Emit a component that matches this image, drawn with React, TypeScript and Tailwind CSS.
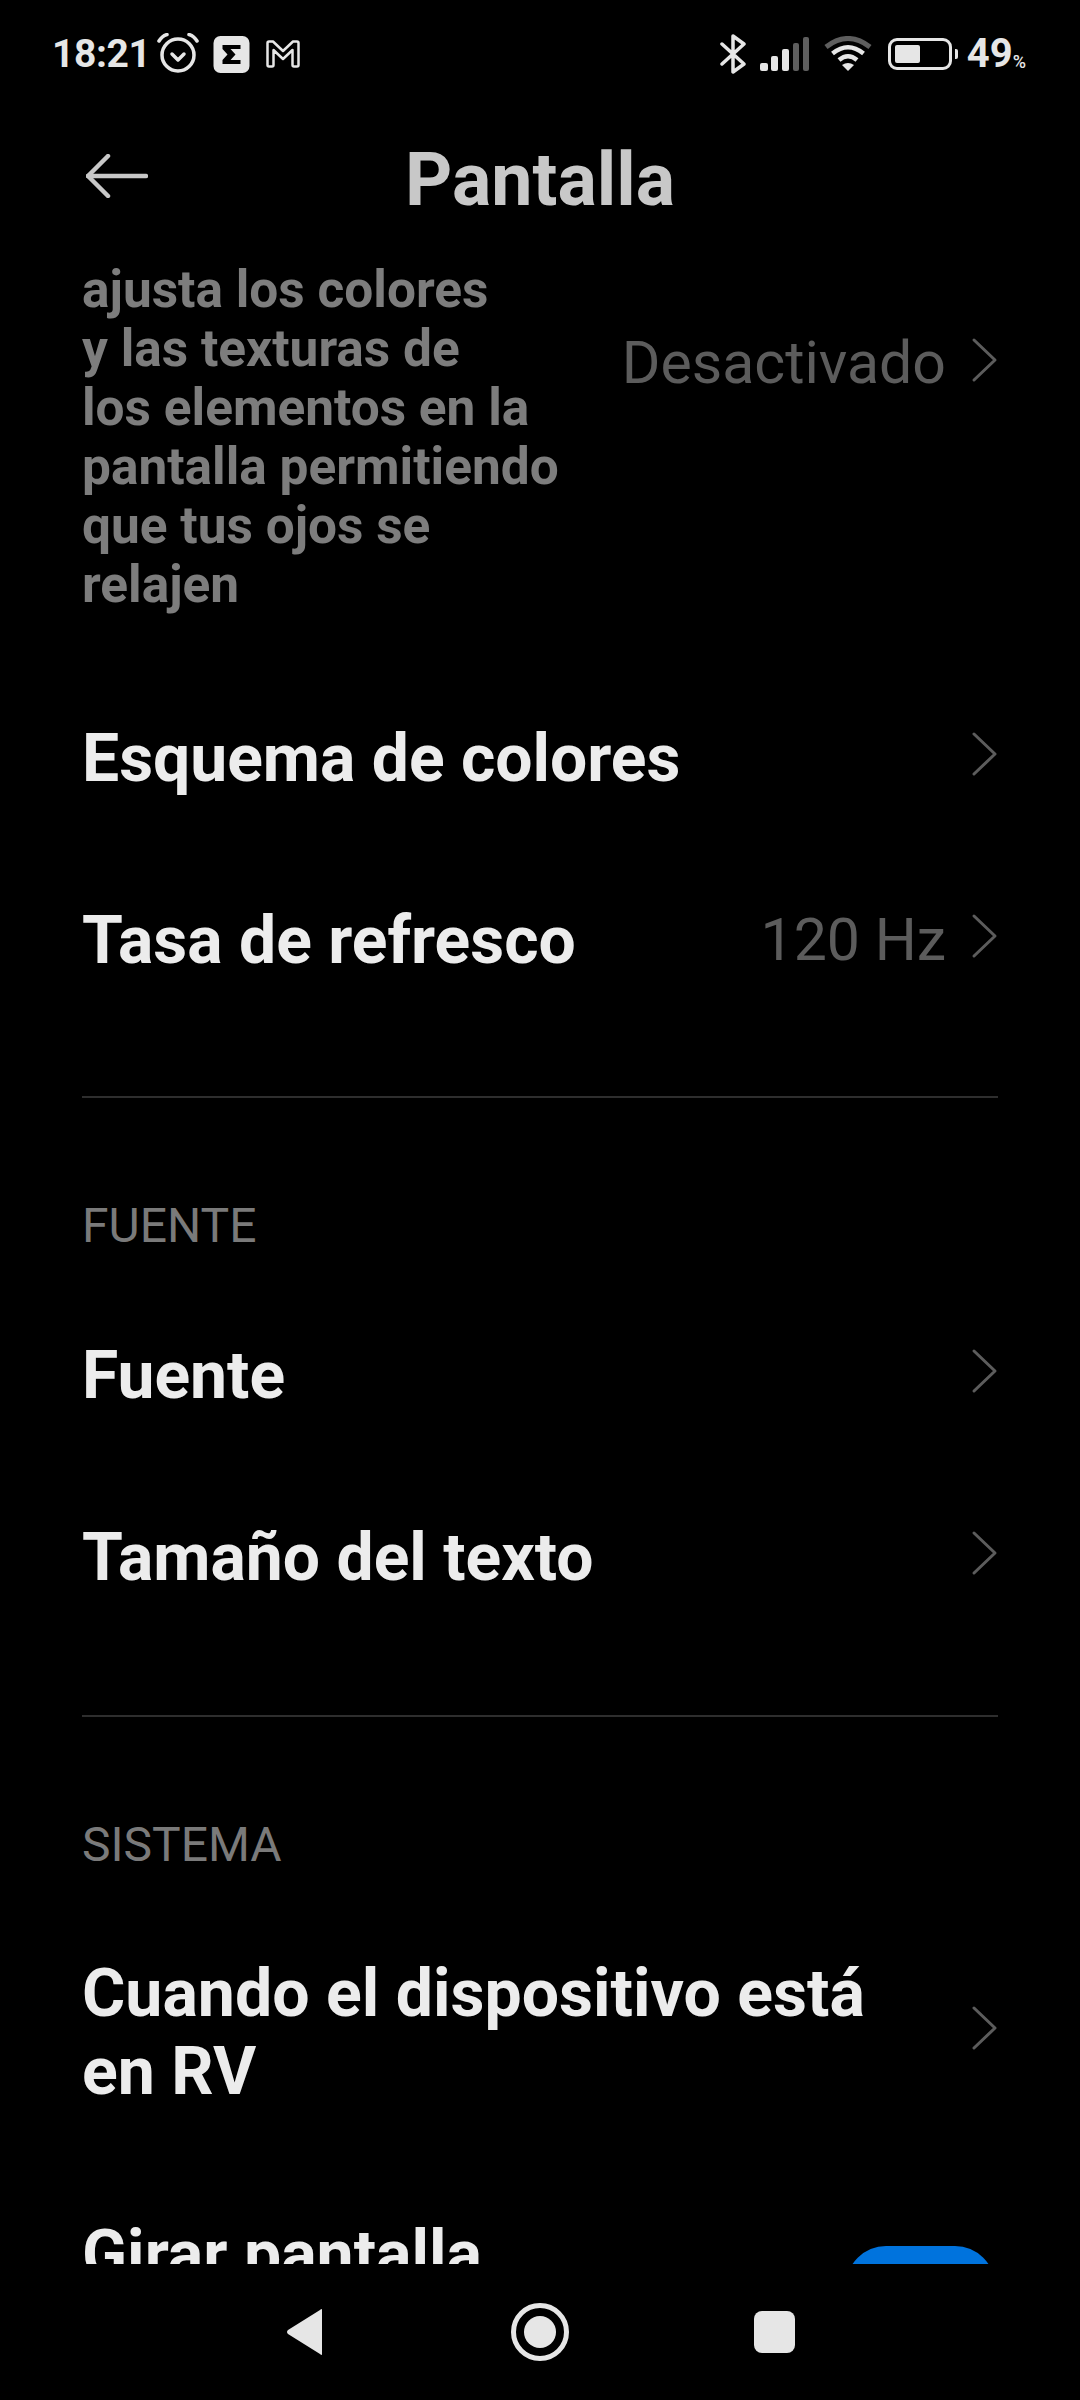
const font = { fontFamily: 'Roboto, sans-serif' }

function Chevron() {
  return (
    <svg width="28" height="48" viewBox="0 0 28 48" className="mb-[6px] shrink-0 text-[#5c5c5c]" fill="none">
      <path d="M4 4 L25 24 L4 44" stroke="currentColor" strokeWidth="3" strokeLinecap="round" strokeLinejoin="round" />
    </svg>
  )
}

function StatusBar() {
  return (
    <div className="flex h-[108px] items-center justify-between pl-[52px] pr-[54px] text-[#e6e6e6]">
      <div className="flex items-center">
        <span className="text-[39px] font-bold leading-none tracking-[-0.4px]">18:21</span>
        <svg width="42" height="40" viewBox="0 0 42 40" className="mb-[2px] ml-[6px]" fill="none" stroke="#e6e6e6" strokeWidth="3.5" strokeLinecap="round" strokeLinejoin="round">
          <circle cx="21" cy="22" r="16" />
          <path d="M15 21 L21 27 L27 21" />
          <path d="M2 8 Q5 3 10 1.5" />
          <path d="M40 8 Q37 3 32 1.5" />
        </svg>
        <svg width="37" height="37" viewBox="0 0 36 37" className="ml-[14px]">
          <rect width="36" height="37" rx="7" fill="#e6e6e6" />
          <path d="M9 9 H27 V13 H17 L22 18.5 L17 24 H27 V28 H9 V24 L14 18.5 L9 13 Z" fill="#000" />
        </svg>
        <svg width="34" height="28" viewBox="0 0 34 28" className="ml-[16px]" fill="none" stroke="#e6e6e6" strokeWidth="2.5" strokeLinejoin="round">
          <path d="M1.5 3 Q1.5 1.5 3 1.5 H7 L17 11 L27 1.5 H31 Q32.5 1.5 32.5 3 V25 Q32.5 26.5 31 26.5 H28 Q26.5 26.5 26.5 25 V10 L17 19 L7.5 10 V25 Q7.5 26.5 6 26.5 H3 Q1.5 26.5 1.5 25 Z" />
        </svg>
      </div>
      <div className="flex items-center">
        <svg width="26" height="40" viewBox="0 0 26 40" fill="none" stroke="#e6e6e6" strokeWidth="3.5" strokeLinecap="round" strokeLinejoin="round">
          <path d="M2 10 L24 30 L13 38 V2 L24 10 L2 30" />
        </svg>
        <svg width="50" height="34" viewBox="0 0 50 34" className="ml-[14px]">
          <rect x="0" y="26" width="8" height="8" rx="2" fill="#e6e6e6" />
          <rect x="11" y="19" width="7" height="15" rx="2" fill="#e6e6e6" />
          <rect x="22" y="12" width="7" height="22" rx="2" fill="#e6e6e6" />
          <rect x="33" y="6" width="6" height="28" rx="2" fill="#5e5e5e" />
          <rect x="43" y="0" width="6" height="34" rx="2" fill="#5e5e5e" />
        </svg>
        <svg width="48" height="36" viewBox="0 0 48 36" className="ml-[14px]" fill="none" strokeLinecap="butt">
          <path d="M2 11 Q24 -6 46 11" stroke="#5e5e5e" strokeWidth="5" />
          <path d="M8.5 17.5 Q24 5 39.5 17.5" stroke="#e6e6e6" strokeWidth="4.5" />
          <path d="M15 24 Q24 16.5 33 24" stroke="#e6e6e6" strokeWidth="4.5" />
          <path d="M18 29 L24 35 L30 29 Q24 25 18 29 Z" fill="#e6e6e6" />
        </svg>
        <div className="ml-[16px] flex items-center">
          <div className="flex h-[32px] w-[64px] items-center rounded-[9px] border-[3px] border-[#e6e6e6] p-[4px]">
            <div className="h-full w-[25px] rounded-[2px] bg-[#e6e6e6]" />
          </div>
          <div className="ml-[3px] h-[10px] w-[3px] rounded-r-[2px] bg-[#e6e6e6]" />
        </div>
        <span className="ml-[9px] text-[40px] font-bold leading-none">49</span>
        <span className="self-end pb-[3px] text-[18px] font-medium leading-none">%</span>
      </div>
    </div>
  )
}

function Row({ title, value }: { title: string; value?: string }) {
  return (
    <div className="flex h-[182px] items-center justify-between">
      <span className="pt-[3px] text-[66px] font-bold leading-[78px] text-[#ececec]">{title}</span>
      <div className="flex items-center gap-[24px]">
        {value && <span className="text-[59px] leading-none text-[#5c5c5c]">{value}</span>}
        <Chevron />
      </div>
    </div>
  )
}

function Section({ label }: { label: string }) {
  return <div className="mt-[103px] pb-[32px] text-[48px] leading-[50px] text-[#7a7a7a]">{label}</div>
}

export default function App() {
  return (
    <div style={font} className="flex h-[2400px] w-[1080px] flex-col overflow-hidden bg-black">
      <StatusBar />
      <div className="relative flex h-[142px] items-center justify-center pt-[3px]">
        <svg width="62" height="44" viewBox="0 0 62 44" className="absolute left-[86px] top-[46px]" fill="none" stroke="#c8c8c8" strokeWidth="4.5" strokeLinecap="round" strokeLinejoin="round">
          <path d="M2 22 H60" />
          <path d="M22 2 L2 22 L22 42" />
        </svg>
        <h1 className="text-[73.5px] font-bold leading-none text-[#c8c8c8]">Pantalla</h1>
      </div>
      <div className="h-[2014px] overflow-hidden px-[82px]">
        <div className="flex items-start justify-between pt-[10px]">
          <p className="w-[500px] text-[51.4px] font-bold leading-[59px] text-[#7d7d7d]">
            ajusta los colores<br />y las texturas de<br />los elementos en la<br />pantalla permitiendo<br />que tus ojos se<br />relajen
          </p>
          <div className="mt-[73px] flex items-center gap-[24px]">
            <span className="text-[59px] leading-none text-[#5c5c5c]">Desactivado</span>
            <Chevron />
          </div>
        </div>
        <div className="mt-[52px]">
          <Row title="Esquema de colores" />
          <Row title="Tasa de refresco" value="120 Hz" />
        </div>
        <div className="mt-[66px] h-[2px] bg-[#2e2e2e]" />
        <Section label="FUENTE" />
        <Row title="Fuente" />
        <Row title="Tamaño del texto" />
        <div className="mt-[68px] h-[2px] bg-[#2e2e2e]" />
        <Section label="SISTEMA" />
        <div className="flex h-[258px] items-center justify-between">
          <span className="w-[800px] pt-[3px] text-[66.2px] font-bold leading-[78px] text-[#ececec]">Cuando el dispositivo está en RV</span>
          <Chevron />
        </div>
        <div className="mt-[55px] flex items-start justify-between">
          <span className="pt-[1px] text-[66.2px] font-bold leading-[78px] text-[#ececec]">Girar pantalla</span>
          <div className="mt-[31px] mr-[3px] h-[80px] w-[149px] rounded-full bg-[#0073dd]" />
        </div>
      </div>
      <div className="flex flex-1 items-center justify-center">
        <svg width="38" height="48" viewBox="0 0 38 48" className="mr-[187px]">
          <path d="M36 2 V46 Q36 48 34 46 L2 26 Q0 24 2 22 L34 2 Q36 0 36 2 Z" fill="#e6e6e6" />
        </svg>
        <svg width="58" height="58" viewBox="0 0 58 58" className="mr-[185px]">
          <circle cx="29" cy="29" r="26.5" fill="none" stroke="#e6e6e6" strokeWidth="5" />
          <circle cx="29" cy="29" r="16" fill="#e6e6e6" />
        </svg>
        <div className="h-[42px] w-[41px] rounded-[8px] bg-[#e6e6e6]" />
      </div>
    </div>
  )
}
